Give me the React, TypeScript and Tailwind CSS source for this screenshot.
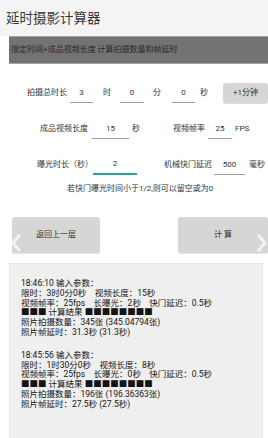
const Input = ({ value, w, active }: { value: string; w: string; active?: boolean }) => (
  <div
    className={`h-[20px] flex items-center justify-center text-[8px] text-[#333] ${w} ${
      active ? 'border-b-2 border-[#26a69a]' : 'border-b border-[#9e9e9e]'
    }`}
  >
    {value}
  </div>
);

const log = [
  '18:46:10 输入参数：',
  '限时：3时0分0秒    视频长度：15秒',
  '视频帧率：25fps    长曝光：2秒    快门延迟：0.5秒',
  '■■■ 计算结果 ■■■■■■■■',
  '照片拍摄数量：345张 (345.04794张)',
  '照片帧延时：31.3秒 (31.3秒)',
];

const log2 = [
  '18:45:56 输入参数：',
  '限时：1时30分0秒    视频长度：8秒',
  '视频帧率：25fps    长曝光：0秒    快门延迟：0.5秒',
  '■■■ 计算结果 ■■■■■■■■',
  '照片拍摄数量：196张 (196.36363张)',
  '照片帧延时：27.5秒 (27.5秒)',
];

const Chevron = ({ flip }: { flip?: boolean }) => (
  <svg width="10" height="18" viewBox="0 0 10 18" className={flip ? 'rotate-180' : ''}>
    <path d="M8 2 L2 9 L8 16" fill="none" stroke="#f2f2f2" strokeWidth="3" strokeLinecap="square" />
  </svg>
);

export default function App() {
  return (
    <div className="w-[268px] h-[438px] bg-white overflow-hidden relative font-['Roboto','Noto_Sans_CJK_SC',sans-serif] text-[#333]">
      <div className="h-[36px] bg-[#f4f4f4] flex items-center pl-[6px] text-[13.5px] text-[#3a3a3a]">
        延时摄影计算器
      </div>
      <div className="ml-[9px] h-[28px] bg-[#737373] border-y border-[#a3a3a3] flex items-center text-[8px] text-[#2a2a2a]">
        ·限定时间+成品视频长度 计算拍摄数量和帧延时
      </div>

      <div className="mt-[19px] h-[20px] flex items-center text-[8px]">
        <span className="ml-[27px]">拍摄总时长</span>
        <div className="ml-[3px]"><Input value="3" w="w-[23px]" /></div>
        <span className="ml-[10px]">时</span>
        <div className="ml-[9px]"><Input value="0" w="w-[24px]" /></div>
        <span className="ml-[9px]">分</span>
        <div className="ml-[11px]"><Input value="0" w="w-[23px]" /></div>
        <span className="ml-[5px]">秒</span>
        <button className="ml-[15px] w-[45px] h-[20px] bg-[#d6d6d6] rounded-[3px] shadow-[0_1px_1px_rgba(0,0,0,0.15)] text-[8px] text-[#333]">
          +1分钟
        </button>
      </div>

      <div className="mt-[16px] h-[20px] flex items-center text-[8px]">
        <span className="ml-[40px]">成品视频长度</span>
        <div className="ml-[4px]"><Input value="15" w="w-[37px]" /></div>
        <span className="ml-[3px]">秒</span>
        <span className="ml-[33px]">视频帧率</span>
        <div className="ml-[3px]"><Input value="25" w="w-[24px]" /></div>
        <span className="ml-[3px]">FPS</span>
      </div>

      <div className="mt-[16px] h-[20px] flex items-center text-[8px]">
        <span className="ml-[37px]">曝光时长（秒）</span>
        <Input value="2" w="w-[44px]" active />
        <span className="ml-[27px]">机械快门延迟</span>
        <div className="ml-[2px]"><Input value="500" w="w-[31px]" /></div>
        <span className="ml-[4px]">毫秒</span>
      </div>

      <div className="mt-[8px] h-[12px] flex items-center pl-[67px] text-[8px]">
        若快门曝光时间小于1/2,则可以留空或为0
      </div>

      <div className="mt-[22px] h-[36px] flex relative">
        <button className="ml-[12px] w-[88px] h-[36px] bg-[#d6d6d6] rounded-[3px] shadow-[0_1px_1px_rgba(0,0,0,0.12)] text-[8px] text-[#333]">
          返回上一层
        </button>
        <button className="ml-auto w-[90px] h-[36px] bg-[#d6d6d6] rounded-[3px] shadow-[0_1px_1px_rgba(0,0,0,0.12)] text-[8px] text-[#333]">
          计 算
        </button>
        <div className="absolute left-[11px] top-[17px]"><Chevron /></div>
        <div className="absolute left-[257px] top-[17px]"><Chevron flip /></div>
      </div>

      <div className="mt-[10px] ml-[9px] w-[254px] h-[200px] bg-[#efefef] border border-[#e6e6e6] pl-[11px] pt-[15px] text-[8.5px] leading-[9.8px] text-[#141414]">
        {log.map((l, i) => (
          <div key={i} className="whitespace-pre">{l}</div>
        ))}
        <div className="h-[13px]" />
        {log2.map((l, i) => (
          <div key={i} className="whitespace-pre">{l}</div>
        ))}
      </div>
    </div>
  );
}
